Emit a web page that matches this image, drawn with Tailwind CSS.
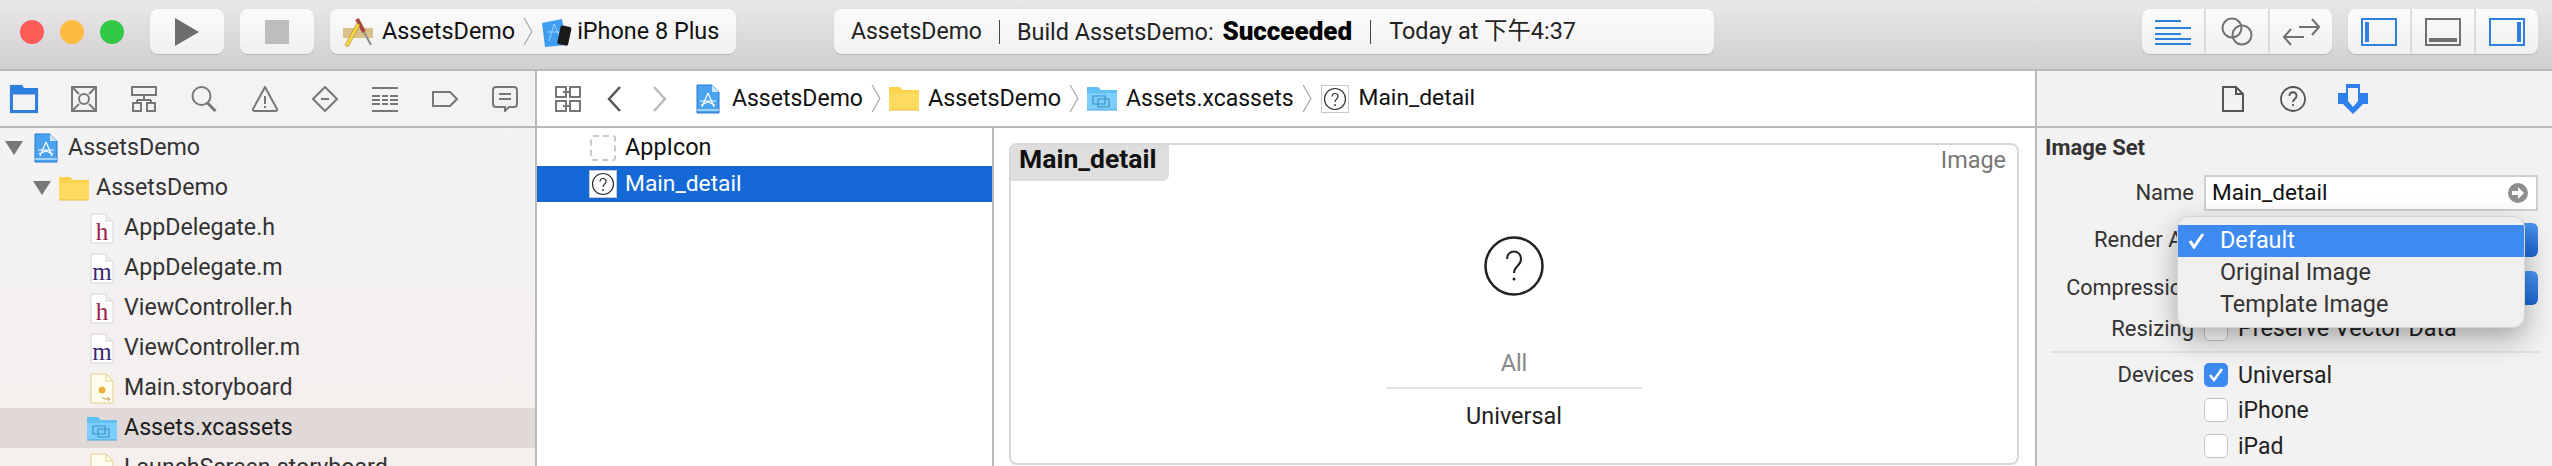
<!DOCTYPE html>
<html lang="en">
<head>
<meta charset="UTF-8">
<title>AssetsDemo - Assets.xcassets</title>
<script src="https://cdn.jsdelivr.net/npm/@tailwindcss/browser@4"></script>
</head>
<body class="w-[2552px] h-[466px] overflow-hidden bg-white text-[23.4px] leading-none text-[#2b2b2b] font-['Roboto','Noto_Sans_CJK_SC',sans-serif]">

<svg class="hidden">
  <symbol id="doc" viewBox="0 0 24 31">
    <path d="M1 1h15l7 7v22H1z" fill="#fff" stroke="#d5d5d5"/><path d="M16 1v7h7" fill="#eee" stroke="#d5d5d5"/>
  </symbol>
  <symbol id="project" viewBox="0 0 24 30">
    <path d="M1 1h15l7 7v21H1z" fill="#4aa3ee" stroke="#2678d0"/><path d="M16 1v7h7z" fill="#cfe6fb"/>
    <path d="M12 9 6 23M12 9l6 14M4 17h16M5 21l7-3 7 3" stroke="#fff" stroke-width="1.2" fill="none"/><path d="M1 26h22" stroke="#fff" stroke-width="1"/>
  </symbol>
  <symbol id="folder-y" viewBox="0 0 30 25">
    <path d="M0 24V1h11l3 3h16v20z" fill="#fcd34b"/><path d="M0 7h30v17H0z" fill="#fedb5f"/><path d="M0 24h30" stroke="#e8b93a"/>
  </symbol>
  <symbol id="folder-b" viewBox="0 0 30 25">
    <path d="M0 24V1h11l3 3h16v20z" fill="#62c1f3"/><path d="M0 7h30v17H0z" fill="#7ccffa"/>
    <path d="M6 10h12v8H6zM11 13h11v8H11z" fill="none" stroke="#3a8fc6" stroke-width="1.2"/><path d="M0 24h30" stroke="#3fa5db"/>
  </symbol>
  <symbol id="question" viewBox="0 0 28 28">
    <rect width="28" height="28" fill="#fff"/><rect x=".5" y=".5" width="27" height="27" fill="none" stroke="#c8c8c8"/><circle cx="14" cy="14" r="10.5" fill="#fff" stroke="#333" stroke-width="1.2"/>
    <path d="M11 11.5c0-4 6-4 6 0 0 2.500-3 2.500-3 5.500" fill="none" stroke="#333" stroke-width="1.200"/><circle cx="14" cy="20" r=".9" fill="#333"/>
  </symbol>
  <symbol id="chev" viewBox="0 0 10 30">
    <path d="M1 1l8 14-8 14" fill="none" stroke="#a9a9a9" stroke-width="1.300"/>
  </symbol>
</svg>

<!-- toolbar -->
<header class="h-[69px] flex items-start pt-[9px] bg-gradient-to-b from-[#e9e7e9] to-[#d1cfd1]">
  <div class="flex items-center h-[45px] pl-[20px] gap-4 w-[150px]">
    <span class="w-6 h-6 rounded-full bg-[#fc5b57]"></span>
    <span class="w-6 h-6 rounded-full bg-[#fdbc40]"></span>
    <span class="w-6 h-6 rounded-full bg-[#33c748]"></span>
  </div>
  <button class="w-[74px] h-[45px] rounded-lg bg-gradient-to-b from-[#fbfbfb] to-[#f0f0f0] shadow-[0_1px_1px_#b5b3b5] flex items-center justify-center">
    <svg width="24" height="28" viewBox="0 0 24 28"><path d="M0 0l24 14L0 28z" fill="#6e6e6e"/></svg>
  </button>
  <button class="ml-4 w-[74px] h-[45px] rounded-lg bg-gradient-to-b from-[#fbfbfb] to-[#f0f0f0] shadow-[0_1px_1px_#b5b3b5] flex items-center justify-center">
    <span class="w-6 h-6 bg-[#bdbdbd]"></span>
  </button>
  <div class="ml-4 w-[406px] h-[45px] rounded-lg bg-gradient-to-b from-[#fbfbfb] to-[#f0f0f0] shadow-[0_1px_1px_#b5b3b5] flex items-center pl-3 text-[#111]">
    <svg width="31" height="30" viewBox="0 0 31 30"><path d="M1 11h30v10H1z" fill="#dcc08c"/><path d="M15 2 22 15" stroke="#a8453a" stroke-width="4"/><path d="M22 15l7 13" stroke="#8d8a8a" stroke-width="2"/><path d="M3 28 15 6l3 2L6 30z" fill="#f3d543" stroke="#a88c2a" stroke-width=".6"/></svg>
    <span class="ml-[9px]">AssetsDemo</span>
    <svg class="ml-2" width="10" height="29"><use href="#chev"/></svg>
    <svg class="ml-2" width="32" height="30" viewBox="0 0 32 30"><path d="M1 6 21 2l4 26-21 2z" fill="#3f9df0"/><path d="M13 7 8 24M13 7l7 15M6 15h15" stroke="#9ed2ff" stroke-width="1" fill="none"/><rect x="18" y="9" width="11" height="19" rx="2" transform="rotate(12 23 18)" fill="#1a1a1a"/></svg>
    <span class="ml-1">iPhone 8 Plus</span>
  </div>
  <div class="ml-[98px] w-[880px] h-[45px] rounded-lg bg-gradient-to-b from-[#fbfbfb] to-[#f2f2f2] shadow-[0_1px_1px_#b5b3b5] flex items-center pl-[17px] text-[#222]">
    <span class="text-[23px]">AssetsDemo</span>
    <span class="mx-[17px] w-px h-6 bg-[#444]"></span>
    <span>Build AssetsDemo: <b class="ml-[3px] font-black text-[26px] text-black">Succeeded</b></span>
    <span class="mx-[18px] w-px h-6 bg-[#444]"></span>
    <span>Today at 下午4:37</span>
  </div>
  <div class="ml-[428px] flex w-[190px] h-[45px] rounded-lg bg-gradient-to-b from-[#fbfbfb] to-[#f0f0f0] shadow-[0_1px_1px_#b5b3b5] divide-x-2 divide-[#dcdadc]">
    <div class="flex-1 flex items-center justify-center">
      <svg width="36" height="26" viewBox="0 0 36 26" fill="none" stroke="#2f7fdd" stroke-width="2"><path d="M0 2h26M0 9h36M0 15h26M0 20h36M0 25h36"/></svg>
    </div>
    <div class="flex-1 flex items-center justify-center">
      <svg width="32" height="30" viewBox="0 0 32 30" fill="none" stroke="#707070" stroke-width="2"><circle cx="11" cy="11" r="9.500"/><circle cx="21" cy="18" r="9.500"/></svg>
    </div>
    <div class="flex-1 flex items-center justify-center">
      <svg width="37" height="28" viewBox="0 0 37 28" fill="none" stroke="#707070" stroke-width="2"><path d="M16 9h20M29 1l7 8-7 8M21 19H1M8 11l-7 8 7 8"/></svg>
    </div>
  </div>
  <div class="ml-4 flex w-[190px] h-[45px] rounded-lg bg-gradient-to-b from-[#fbfbfb] to-[#f0f0f0] shadow-[0_1px_1px_#b5b3b5] divide-x-2 divide-[#dcdadc]">
    <div class="flex-1 flex items-center justify-center">
      <svg width="36" height="28" viewBox="0 0 36 28"><rect x="1" y="1" width="34" height="26" fill="none" stroke="#2f7fdd" stroke-width="2"/><rect x="4" y="4" width="4" height="20" fill="#2f7fdd"/></svg>
    </div>
    <div class="flex-1 flex items-center justify-center">
      <svg width="36" height="28" viewBox="0 0 36 28"><rect x="1" y="1" width="34" height="26" fill="none" stroke="#707070" stroke-width="2"/><rect x="4" y="20" width="28" height="4" fill="#707070"/></svg>
    </div>
    <div class="flex-1 flex items-center justify-center">
      <svg width="36" height="28" viewBox="0 0 36 28"><rect x="1" y="1" width="34" height="26" fill="none" stroke="#2f7fdd" stroke-width="2"/><rect x="28" y="4" width="4" height="20" fill="#2f7fdd"/></svg>
    </div>
  </div>
</header>

<!-- tab bars -->
<div class="h-[59px] flex border-y-2 border-[#b9b9b9]">
  <nav class="w-[537px] shrink-0 border-r-2 border-[#b9b9b9] bg-[#f3f3f4] flex items-center pl-[11px] gap-[34px]">
    <svg width="26" height="26" viewBox="0 0 26 26" class="scale-110"><path d="M0 0h11l2 3h13v23H0z" fill="#2f7fdd"/><path d="M3 9h20v14H3z" fill="#f3f3f4"/></svg>
    <svg width="26" height="26" viewBox="0 0 26 26" fill="none" stroke="#777" stroke-width="2"><path d="M1 1h24v24H1zM2 2l6 6M24 2l-6 6M2 24l6-6M24 24l-6-6"/><circle cx="13" cy="13" r="5"/></svg>
    <svg width="26" height="26" viewBox="0 0 26 26" fill="none" stroke="#777" stroke-width="2"><path d="M1 1h24v8H1zM13 9v5M6 14h14M6 14v3M20 14v3M2 17h8v8H2zM16 17h8v8h-8z"/></svg>
    <svg width="27" height="26" viewBox="0 0 27 26" fill="none" stroke="#777" stroke-width="2"><circle cx="10.500" cy="10" r="9"/><path d="M16.500 17l8 8" stroke-width="3"/></svg>
    <svg width="26" height="26" viewBox="0 0 26 26" fill="none" stroke="#777" stroke-width="2"><path d="M13 1 25 23q.5 2-1.500 2h-21q-2 0-1.500-2zM13 10v8M13 20v2"/></svg>
    <svg width="26" height="26" viewBox="0 0 26 26" fill="none" stroke="#777" stroke-width="2"><path d="M13 1 25 13 13 25 1 13zM9 13h8"/></svg>
    <svg width="26" height="26" viewBox="0 0 26 26" fill="none" stroke="#777" stroke-width="2"><path d="M0 2h26M0 10h26M0 14h26M0 18h26M0 25h26"/><path d="M9 9v10M17 9v10" stroke="#f3f3f4"/></svg>
    <svg width="26" height="26" viewBox="0 0 26 26" fill="none" stroke="#777" stroke-width="2"><path d="M1 6h17l7 7-7 7H1z"/></svg>
    <svg width="26" height="26" viewBox="0 0 26 26" fill="none" stroke="#777" stroke-width="2"><path d="M4 1h18q3 0 3 3v14q0 3-3 3h-5l-4 4v-4H4q-3 0-3-3V4q0-3 3-3zM7 8h12M7 13h12"/></svg>
  </nav>
  <div class="flex-1 bg-white flex items-center pl-[18px] text-[#111]">
    <svg width="26" height="26" viewBox="0 0 26 26" fill="none" stroke="#777" stroke-width="2"><path d="M1 1h10v10H1zM15 1h10v10H15zM1 15h10v10H1zM15 15h10v10H15zM8 6h8M8 20h8"/></svg>
    <svg class="ml-[26px]" width="14" height="26" viewBox="0 0 14 26" fill="none" stroke="#555" stroke-width="2.500"><path d="M13 1 2 13l11 12"/></svg>
    <svg class="ml-[32px]" width="14" height="26" viewBox="0 0 14 26" fill="none" stroke="#bbb" stroke-width="2.500"><path d="M1 1l11 12L1 25"/></svg>
    <svg class="ml-[29px]" width="24" height="30"><use href="#project"/></svg>
    <span class="ml-3 text-[23px]">AssetsDemo</span>
    <svg class="ml-2" width="10" height="29"><use href="#chev"/></svg>
    <svg class="ml-2" width="30" height="25"><use href="#folder-y"/></svg>
    <span class="ml-[9px]">AssetsDemo</span>
    <svg class="ml-2" width="10" height="29"><use href="#chev"/></svg>
    <svg class="ml-2" width="30" height="25"><use href="#folder-b"/></svg>
    <span class="ml-[9px] text-[23px]">Assets.xcassets</span>
    <svg class="ml-2" width="10" height="29"><use href="#chev"/></svg>
    <svg class="ml-[9px]" width="28" height="28"><use href="#question"/></svg>
    <span class="ml-[10px] text-[22.8px]">Main_detail</span>
  </div>
  <div class="w-[517px] shrink-0 border-l-2 border-[#b9b9b9] bg-[#f2f2f2] flex items-center pl-[185px]">
    <svg width="22" height="26" viewBox="0 0 22 26" fill="none" stroke="#555" stroke-width="2"><path d="M1 1h13l7 7v17H1zM14 1v7h7"/></svg>
    <svg class="ml-[36px]" width="26" height="26" viewBox="0 0 26 26" fill="none" stroke="#555" stroke-width="1.800"><circle cx="13" cy="13" r="12"/><path d="M9.500 10c0-5 7-5 7 0 0 3-3.500 3-3.500 6"/><path d="M13 18v2"/></svg>
    <svg class="ml-[32px]" width="30" height="30" viewBox="0 0 30 30"><path d="M8 0h14v9h8v11h-5L15 30 5 20H0V9h8z" fill="#2f80ee"/><path d="M10 4h10v13l-5 6-5-6z" fill="#f2f2f2"/></svg>
  </div>
</div>

<main class="flex h-[338px]">
  <!-- navigator -->
  <section class="w-[537px] shrink-0 border-r-2 border-[#b9b9b9] bg-gradient-to-b from-[#f3f3f4] to-[#f5efed] text-[23.2px] text-[#333]">
    <div class="h-10 flex items-center pl-[5px]">
      <svg width="18" height="14"><path d="M0 0h18L9 14z" fill="#777"/></svg>
      <svg class="ml-[11px]" width="24" height="30"><use href="#project"/></svg>
      <span class="ml-[10px]">AssetsDemo</span>
    </div>
    <div class="h-10 flex items-center pl-[33px]">
      <svg width="18" height="14"><path d="M0 0h18L9 14z" fill="#777"/></svg>
      <svg class="ml-2" width="30" height="25"><use href="#folder-y"/></svg>
      <span class="ml-[7px]">AssetsDemo</span>
    </div>
    <div class="h-10 flex items-center pl-[90px]">
      <svg width="24" height="31" class="shrink-0"><use href="#doc"/><text x="12" y="27" text-anchor="middle" font-family="Liberation Serif" font-size="25" fill="#9c2148">h</text></svg>
      <span class="ml-[10px]">AppDelegate.h</span>
    </div>
    <div class="h-10 flex items-center pl-[90px]">
      <svg width="24" height="31" class="shrink-0"><use href="#doc"/><text x="12" y="27" text-anchor="middle" font-family="Liberation Serif" font-size="25" fill="#3b2a78">m</text></svg>
      <span class="ml-[10px]">AppDelegate.m</span>
    </div>
    <div class="h-10 flex items-center pl-[90px]">
      <svg width="24" height="31" class="shrink-0"><use href="#doc"/><text x="12" y="27" text-anchor="middle" font-family="Liberation Serif" font-size="25" fill="#9c2148">h</text></svg>
      <span class="ml-[10px]">ViewController.h</span>
    </div>
    <div class="h-10 flex items-center pl-[90px]">
      <svg width="24" height="31" class="shrink-0"><use href="#doc"/><text x="12" y="27" text-anchor="middle" font-family="Liberation Serif" font-size="25" fill="#3b2a78">m</text></svg>
      <span class="ml-[10px]">ViewController.m</span>
    </div>
    <div class="h-10 flex items-center pl-[90px]">
      <svg width="24" height="31" viewBox="0 0 24 31" class="shrink-0"><path d="M1 1h15l7 7v22H1z" fill="#fffdf0" stroke="#e3cf86"/><path d="M16 1v7h7" fill="none" stroke="#e3cf86"/><circle cx="12" cy="17" r="3.500" fill="#e8b23c"/><path d="M12 24q1 2 4 2h4M18 24l2 2-2 2" fill="none" stroke="#b89b4a"/></svg>
      <span class="ml-[10px]">Main.storyboard</span>
    </div>
    <div class="h-10 flex items-center pl-[87px] bg-[#e0d9d7] text-[#1c1c1c]">
      <svg width="30" height="25" class="shrink-0"><use href="#folder-b"/></svg>
      <span class="ml-[7px]">Assets.xcassets</span>
    </div>
    <div class="h-10 flex items-center pl-[90px]">
      <svg width="24" height="31" viewBox="0 0 24 31" class="shrink-0"><path d="M1 1h15l7 7v22H1z" fill="#fffdf0" stroke="#e3cf86"/><path d="M16 1v7h7" fill="none" stroke="#e3cf86"/></svg>
      <span class="ml-[10px]">LaunchScreen.storyboard</span>
    </div>
  </section>

  <!-- asset list -->
  <section class="w-[457px] shrink-0 bg-white border-r-2 border-[#b9b9b9] pt-[2px] text-[#111]">
    <div class="h-9 flex items-center pl-[53px]">
      <span class="w-[26px] h-[26px] rounded-[3px] border-2 border-dashed border-[#c9c9c9]"></span>
      <span class="ml-[9px]">AppIcon</span>
    </div>
    <div class="h-9 flex items-center pl-[52px] bg-[#1469d6] text-white">
      <svg width="28" height="28"><use href="#question"/></svg>
      <span class="ml-2 text-[22.8px]">Main_detail</span>
    </div>
  </section>

  <!-- asset editor -->
  <section class="flex-1 bg-white pl-[15px] pr-[16px] pt-[15px]">
    <div class="h-[322px] rounded-lg border-2 border-[#d8d8d8] overflow-hidden flex flex-col">
      <div class="flex items-start justify-between">
        <span class="w-[158px] h-[36px] bg-[#dedede] rounded-br-md pl-2 pb-[7px] flex items-center font-bold text-[26.5px] text-[#111]">Main_detail</span>
        <span class="mt-1 pr-[11px] text-[#777]">Image</span>
      </div>
      <div class="flex flex-col items-center">
        <svg class="mt-[55px]" width="60" height="60" viewBox="0 0 60 60" fill="none" stroke="#222"><circle cx="30" cy="30" r="28.500" stroke-width="2.500"/><path d="M23 23c0-10 14-10 14 0 0 7-7 7-7 14" stroke-width="2"/><circle cx="30" cy="43" r="1.500" fill="#222" stroke="none"/></svg>
        <span class="mt-[53px] h-[30px] flex items-center text-[#888]">All</span>
        <span class="mt-2 w-[256px] h-[2px] bg-[#e3e3e3]"></span>
        <span class="mt-[13px] h-[30px] flex items-center text-[#222]">Universal</span>
      </div>
    </div>
  </section>

  <!-- inspector -->
  <section class="w-[517px] shrink-0 border-l-2 border-[#b9b9b9] bg-[#f2f2f2] relative">
    <h2 class="h-[39px] pl-[8px] flex items-center font-bold text-[22px] text-[#333]">Image Set</h2>
    <div class="mt-2 flex items-center h-9">
      <span class="w-[157px] text-right text-[22px] text-[#333]">Name</span>
      <div class="ml-[10px] w-[334px] h-9 bg-white border-2 border-[#cfcfcf] flex items-center justify-between pl-[6px] pr-2 text-[22.6px] text-[#111]">
        Main_detail
        <svg width="20" height="20" viewBox="0 0 20 20"><circle cx="10" cy="10" r="10" fill="#8f8f8f"/><path d="M4 8h6V4l6 6-6 6v-4H4z" fill="#fff"/></svg>
      </div>
    </div>
    <div class="mt-3 flex items-center h-[34px]">
      <span class="w-[157px] text-right text-[22px] text-[#333]">Render As</span>
      <div class="ml-[10px] w-[334px] h-[34px] rounded-md bg-white flex justify-end overflow-hidden"><span class="w-10 bg-gradient-to-b from-[#4a97f5] to-[#1a67d4]"></span></div>
    </div>
    <div class="mt-[14px] flex items-center h-[34px]">
      <span class="w-[157px] text-right text-[21.6px] text-[#333]">Compression</span>
      <div class="ml-[10px] w-[334px] h-[34px] rounded-md bg-white flex justify-end overflow-hidden"><span class="w-10 bg-gradient-to-b from-[#4a97f5] to-[#1a67d4]"></span></div>
    </div>
    <div class="mt-3 flex items-center h-6">
      <span class="w-[157px] text-right text-[22px] text-[#333]">Resizing</span>
      <span class="ml-[10px] w-6 h-6 rounded-[5px] bg-white border border-[#c4c4c4]"></span>
      <span class="ml-[10px] text-[#222]">Preserve Vector Data</span>
    </div>
    <div class="mt-[10px] ml-[14px] mr-[12px] h-[2px] bg-[#e0e0e0]"></div>
    <div class="mt-[10px] flex items-center h-6">
      <span class="w-[157px] text-right text-[22px] text-[#333]">Devices</span>
      <span class="ml-[10px] w-6 h-6 rounded-[5px] bg-[#3d8bf0] flex items-center justify-center">
        <svg width="16" height="14" viewBox="0 0 16 14" fill="none" stroke="#fff" stroke-width="2.500"><path d="M2 7l4 5 8-11"/></svg>
      </span>
      <span class="ml-[10px] text-[23px] text-[#222]">Universal</span>
    </div>
    <div class="mt-[11px] flex items-center h-6 pl-[167px]">
      <span class="w-6 h-6 rounded-[5px] bg-white border border-[#c4c4c4]"></span>
      <span class="ml-[10px] text-[23px] text-[#222]">iPhone</span>
    </div>
    <div class="mt-3 flex items-center h-6 pl-[167px]">
      <span class="w-6 h-6 rounded-[5px] bg-white border border-[#c4c4c4]"></span>
      <span class="ml-[10px] text-[23px] text-[#222]">iPad</span>
    </div>

    <!-- popup menu -->
    <div class="absolute left-[140px] top-[88px] w-[348px] h-[112px] pt-2 rounded-[12px] bg-[#f1efee] border border-[#d5d5d5] shadow-[0_10px_28px_rgba(0,0,0,0.32)] overflow-hidden text-[#333]">
      <div class="h-8 flex items-center bg-[#3d8bf0] text-white pl-[10px]">
        <svg width="17" height="16" viewBox="0 0 17 16" fill="none" stroke="#fff" stroke-width="3"><path d="M2 8l4 6 9-13"/></svg>
        <span class="ml-[15px]">Default</span>
      </div>
      <div class="h-8 flex items-center pl-[42px]">Original Image</div>
      <div class="h-8 flex items-center pl-[42px]">Template Image</div>
    </div>
  </section>
</main>
</body>
</html>
